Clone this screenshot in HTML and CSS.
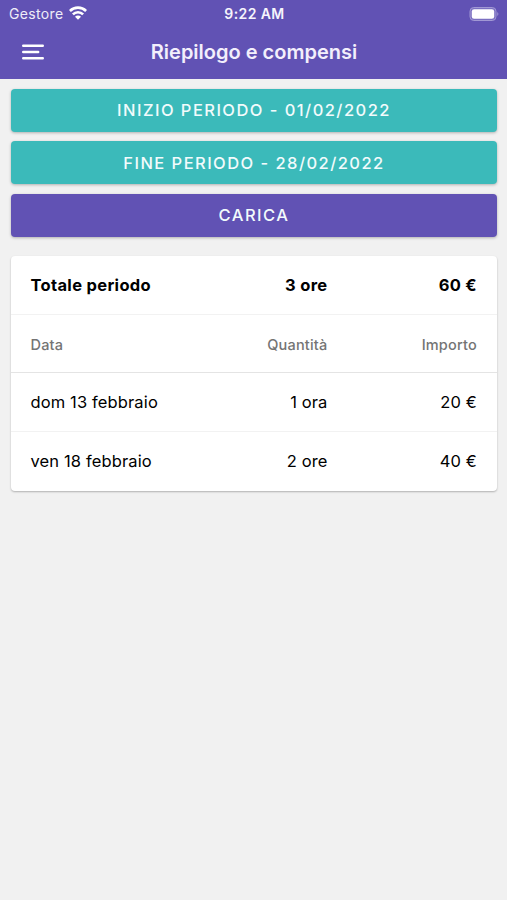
FILE: index.html
```html
<!DOCTYPE html>
<html lang="it">
<head>
<meta charset="utf-8">
<title>Riepilogo e compensi</title>
<link rel="stylesheet" href="styles.css">
</head>
<body>
<header class="header">
  <div class="status">
    <div class="carrier"><span>Gestore</span>
      <svg class="wifi" width="18" height="14" viewBox="0 0 18 14"><g fill="none" stroke="#fff" stroke-width="2.6"><path d="M.9 5a11.500 11.500 0 0 1 16.200 0"/><path d="M3.900 8.400a7.200 7.200 0 0 1 10.200 0"/></g><path d="M6 10.700a4.200 4.200 0 0 1 6 0L9 13.700z" fill="#fff"/></svg>
    </div>
    <span class="clock">9:22 AM</span>
    <svg class="battery" width="31" height="14" viewBox="0 0 31 14"><rect x="1" y=".5" width="26" height="13" rx="3.800" fill="#7b6fc1" stroke="#a198d4"/><rect x="2.800" y="2.200" width="22.400" height="9.600" rx="2.300" fill="#fff"/><path d="M28.300 5q2.200 2 0 4z" fill="#a198d4"/></svg>
  </div>
  <div class="toolbar">
    <svg class="menu" width="22" height="16" viewBox="0 0 22 16" fill="none" stroke="#fff" stroke-width="2.4" stroke-linecap="round"><path d="M1.200 1.800h19.600M1.200 8h15M1.200 14.200h19.600"/></svg>
    <h1 class="title">Riepilogo e compensi</h1>
  </div>
</header>
<main class="content">
  <button class="btn teal">INIZIO PERIODO - 01/02/2022</button>
  <button class="btn teal end">FINE PERIODO - 28/02/2022</button>
  <button class="btn purple">CARICA</button>
  <section class="card">
    <div class="row total"><span>Totale periodo</span><span>3 ore</span><span>60 €</span></div>
    <div class="row head"><span>Data</span><span>Quantità</span><span>Importo</span></div>
    <div class="row"><span>dom 13 febbraio</span><span>1 ora</span><span>20 €</span></div>
    <div class="row"><span>ven 18 febbraio</span><span>2 ore</span><span>40 €</span></div>
  </section>
</main>
</body>
</html>
```
FILE: styles.css
```css
* { box-sizing: border-box; }
body { margin: 0; min-height: 900px; background: #f1f1f1; font-family: Inter, "Liberation Sans", sans-serif; color: #000; }
.header { height: 79px; background: #6152b4; color: #fff; }
.status { height: 27px; display: grid; grid-template-columns: 1fr auto 1fr; align-items: center; padding: 0 7px 0 9px; font-size: 14px; }
.carrier { display: flex; align-items: center; gap: 5px; letter-spacing: .35px; color: #efedf8; }
.wifi { margin-top: -1px; }
.clock { font-weight: 600; letter-spacing: .4px; color: #f6f4fc; }
.battery { justify-self: end; }
.toolbar { height: 50px; display: grid; grid-template-columns: 22px 1fr 22px; align-items: center; padding: 0 21px 0 22px; }
.title { margin: 0; text-align: center; font-size: 20px; line-height: 24px; font-weight: 600; color: #f3effc; }
.content { padding: 9.5px 10px 0 11px; }
.btn { display: block; width: 100%; height: 43px; margin: 0 0 9.5px; padding: 0 0 1px; border: 0; border-radius: 4px; color: #f2fbfc; font: 500 16.5px Inter, sans-serif; letter-spacing: 1.45px; box-shadow: 0 1px 3px #0004; }
.end { padding-bottom: 0; }
.teal { background: #3bbaba; }
.purple { background: #6152b4; }
.card { margin-top: 19.5px; height: 235px; background: #fff; border-radius: 4px; box-shadow: 0 1px 2px #0004; }
.row { height: 58.6px; display: grid; grid-template-columns: 148px 149px 1fr; align-items: center; padding: 0 20px 0 19.5px; font-size: 16.5px; letter-spacing: .13px; border-bottom: 1px solid #f2f2f2; }
.row span + span { text-align: right; }
.row:last-child { border-bottom: 0; }
.total { font-weight: 700; letter-spacing: .33px; }
.head { padding-top: 2px; font-size: 14.5px; letter-spacing: .2px; font-weight: 500; color: #747474; border-bottom-color: #e4e4e4; }
```
